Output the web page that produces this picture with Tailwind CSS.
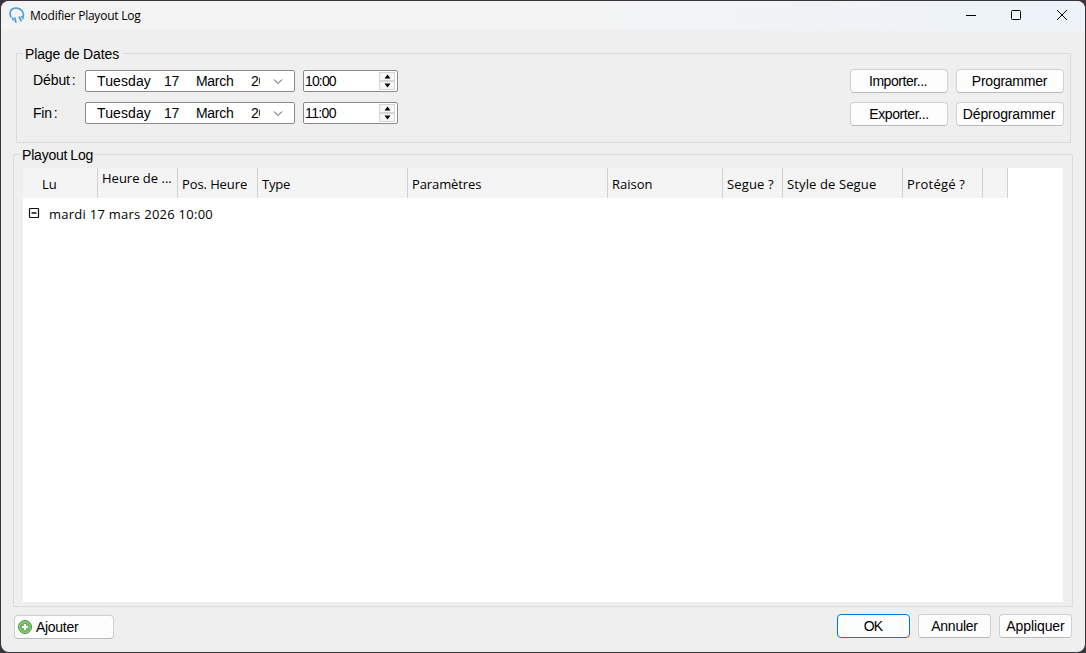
<!DOCTYPE html>
<html lang="fr">
<head>
    <meta charset="UTF-8">
    <title>Modifier Playout Log</title>
    <script src="https://cdn.jsdelivr.net/npm/@tailwindcss/browser@4"></script>
</head>
<body class="w-[1086px] h-[653px] overflow-hidden bg-[#38363a] p-px text-black font-['Liberation_Sans',Arial,sans-serif] text-[14px] leading-4">
    <div class="flex flex-col w-[1084px] h-[651px] rounded-lg overflow-hidden bg-[#efefef]">

        <!-- Title bar -->
        <header class="flex items-center h-[30px] shrink-0 pl-2 bg-linear-to-r from-[#f3f3f3] via-[#f3f3f3] to-[#edf3f9]">
            <svg class="w-4 h-4 mb-0.5" viewBox="0 0 16 16" fill="none" stroke="#4a9fd8">
                <path d="M2.200 10.500C-.6 5.500 2 1 7 1c5 0 8.500 4.500 7.200 9" stroke-width="1.600"/>
                <path d="M3.400 10.500l1 3M5.700 10.500l1.300 5.200M10 9.300l2.300 5M12.700 8.800l1.500 3.400" stroke-width="1.700"/>
            </svg>
            <h1 class="ml-[5px] font-['Open_Sans',sans-serif] text-[12px] tracking-[-0.23px]">Modifier Playout Log</h1>
            <div class="flex ml-auto">
                <svg class="w-[46px] h-[30px]" viewBox="0 0 46 30" fill="none" stroke="#000"><path d="M19 14.500h10"/></svg>
                <svg class="w-[46px] h-[30px]" viewBox="0 0 46 30" fill="none" stroke="#000"><rect x="18.500" y="9.500" width="9" height="9" rx="1"/></svg>
                <svg class="w-[46px] h-[30px]" viewBox="0 0 46 30" fill="none" stroke="#000"><path d="M18 9l10 10M28 9L18 19"/></svg>
            </div>
        </header>

        <!-- Date range -->
        <fieldset class="flex justify-between h-[98px] shrink-0 mt-3.5 ml-[15px] mr-[14px] px-1.5 border border-[#dcdcdc]">
            <legend class="h-[17px] pt-px pl-0.5 pr-[3px] tracking-[-0.12px]">Plage de Dates</legend>
            <div class="flex flex-col gap-2.5 pt-2 pl-2.5">
                <div class="flex h-[22px]">
                    <label class="w-[52px] pt-0.5 tracking-[-0.1px]">Début<span class="ml-0.5">:</span></label>
                    <div class="flex items-center w-[210px] border border-[#8a8a8a] rounded-[2px] bg-white pl-[11px]">
                        <span class="w-[67px] tracking-[0.1px]">Tuesday</span>
                        <span class="w-8 tracking-[-0.3px]">17</span>
                        <span class="w-[55px] tracking-[-0.3px]">March</span>
                        <span class="w-[9px] tracking-[-0.3px] overflow-hidden">2026</span>
                        <svg class="w-2.5 h-[7px] ml-[13px] mt-px" viewBox="0 0 10 7" fill="none" stroke="#444"><path d="M1 1.500l4 4 4-4"/></svg>
                    </div>
                    <div class="flex items-center justify-between w-[95px] ml-2 border border-[#8a8a8a] rounded-[2px] bg-white pl-px pr-0.5">
                        <span class="tracking-[-0.85px]">10:00</span>
                        <div class="flex flex-col w-4 h-[18px] bg-[#f0f0f0]">
                            <svg class="w-4 h-[9px] border border-[#d6d6d6] bg-[#f7f7f7]" viewBox="0 0 14 7"><path d="M4.500 5.500l3-4 3 4z"/></svg>
                            <svg class="w-4 h-[9px] border border-[#d6d6d6] bg-[#f7f7f7]" viewBox="0 0 14 7"><path d="M4.500 1.500l3 4 3-4z"/></svg>
                        </div>
                    </div>
                </div>
                <div class="flex h-[22px]">
                    <label class="w-[52px] pt-[3px] tracking-[-0.2px]">Fin<span class="ml-0.5">:</span></label>
                    <div class="flex items-center w-[210px] border border-[#8a8a8a] rounded-[2px] bg-white pl-[11px]">
                        <span class="w-[67px] tracking-[0.1px]">Tuesday</span>
                        <span class="w-8 tracking-[-0.3px]">17</span>
                        <span class="w-[55px] tracking-[-0.3px]">March</span>
                        <span class="w-[9px] tracking-[-0.3px] overflow-hidden">2026</span>
                        <svg class="w-2.5 h-[7px] ml-[13px] mt-px" viewBox="0 0 10 7" fill="none" stroke="#444"><path d="M1 1.500l4 4 4-4"/></svg>
                    </div>
                    <div class="flex items-center justify-between w-[95px] ml-2 border border-[#8a8a8a] rounded-[2px] bg-white pl-px pr-0.5">
                        <span class="tracking-[-0.6px]">11:00</span>
                        <div class="flex flex-col w-4 h-[18px] bg-[#f0f0f0]">
                            <svg class="w-4 h-[9px] border border-[#d6d6d6] bg-[#f7f7f7]" viewBox="0 0 14 7"><path d="M4.500 5.500l3-4 3 4z"/></svg>
                            <svg class="w-4 h-[9px] border border-[#d6d6d6] bg-[#f7f7f7]" viewBox="0 0 14 7"><path d="M4.500 1.500l3 4 3-4z"/></svg>
                        </div>
                    </div>
                </div>
            </div>
            <div class="grid grid-cols-[98px_108px] auto-rows-[24px] gap-x-2 gap-y-[9px] pt-[7px]">
                <button class="pr-0.5 border border-[#d0d0d0] border-b-[#bababa] rounded bg-[#fdfdfd] tracking-[-0.45px]">Importer...</button>
                <button class="pr-px border border-[#d0d0d0] border-b-[#bababa] rounded bg-[#fdfdfd] tracking-[-0.25px]">Programmer</button>
                <button class="border border-[#d0d0d0] border-b-[#bababa] rounded bg-[#fdfdfd] tracking-[-0.4px]">Exporter...</button>
                <button class="pr-0.5 border border-[#d0d0d0] border-b-[#bababa] rounded bg-[#fdfdfd] tracking-[-0.15px]">Déprogrammer</button>
            </div>
        </fieldset>

        <!-- Log list -->
        <fieldset class="h-[461px] shrink-0 mt-[3px] ml-3 mr-3 px-1.5 border border-[#dcdcdc]">
            <legend class="h-[17px] pt-px px-0.5 tracking-[-0.2px]">Playout<span class="ml-[3px]">Log</span></legend>
            <div class="w-[1040px] h-[434px] mt-[5px] ml-[3px] bg-white font-['Open_Sans',sans-serif] text-[13px]">
                <div class="flex w-[985px] h-[30px] bg-[#f4f4f4] leading-[32px] whitespace-nowrap">
                    <div class="w-[75px] pl-[19px] border-r border-[#d2d2d2]">Lu</div>
                    <div class="w-[80px] pl-1 border-r border-[#d2d2d2] leading-[21px]">Heure de ...</div>
                    <div class="w-[80px] pl-1 border-r border-[#d2d2d2] tracking-[-0.1px]">Pos. Heure</div>
                    <div class="w-[150px] pl-1 border-r border-[#d2d2d2] tracking-[-0.2px]">Type</div>
                    <div class="w-[200px] pl-1 border-r border-[#d2d2d2] tracking-[-0.1px]">Paramètres</div>
                    <div class="w-[115px] pl-1 border-r border-[#d2d2d2]">Raison</div>
                    <div class="w-[60px] pl-1 border-r border-[#d2d2d2] tracking-[0.15px]">Segue ?</div>
                    <div class="w-[120px] pl-1 border-r border-[#d2d2d2] tracking-[0.12px]">Style de Segue</div>
                    <div class="w-[80px] pl-1 border-r border-[#d2d2d2] tracking-[0.2px]">Protégé ?</div>
                    <div class="w-[25px] border-r border-[#d2d2d2]"></div>
                </div>
                <div class="flex items-center h-8 pl-[5px]">
                    <svg class="w-3 h-3 mb-0.5" viewBox="0 0 12 12" fill="none" stroke="#111"><rect x="1.500" y="1.500" width="9" height="9" rx=".5" stroke-width="1.200"/><path d="M3.500 6h5" stroke-width="1.300"/></svg>
                    <span class="ml-[9px] tracking-[0.26px]">mardi 17 mars 2026 10:00</span>
                </div>
            </div>
        </fieldset>

        <!-- Actions -->
        <footer class="flex items-start pt-[7px] pl-[13px] pr-[13px]">
            <button class="flex items-center w-[100px] h-6 mt-px pl-[3px] border border-[#d0d0d0] border-b-[#bababa] rounded bg-[#fdfdfd]">
                <svg class="w-3.5 h-3.5" viewBox="0 0 14 14"><circle cx="7" cy="7" r="6.500" fill="#6dba5c" stroke="#4d8d48"/><circle cx="7" cy="7" r="5.500" fill="none" stroke="#a3d698" stroke-width=".8"/><path d="M7 4v6M4 7h6" stroke="#fff" stroke-width="2"/></svg>
                <span class="ml-1 tracking-[-0.3px]">Ajouter</span>
            </button>
            <div class="flex gap-2 ml-auto">
                <button class="w-[73px] h-6 pr-px border border-[#0078d4] rounded bg-[#fdfdfd] tracking-[-0.8px]">OK</button>
                <button class="w-[73px] h-6 border border-[#d0d0d0] border-b-[#bababa] rounded bg-[#fdfdfd] tracking-[-0.25px]">Annuler</button>
                <button class="w-[73px] h-6 border border-[#d0d0d0] border-b-[#bababa] rounded bg-[#fdfdfd] tracking-[-0.1px]">Appliquer</button>
            </div>
        </footer>
    </div>
</body>
</html>
